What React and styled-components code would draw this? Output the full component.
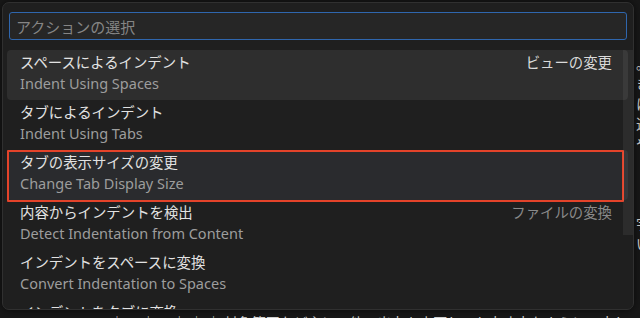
import React from 'react';
import styled, { createGlobalStyle } from 'styled-components';

const GlobalStyle = createGlobalStyle`
    html, body {
        margin: 0;
        padding: 0;
        background: #181818;
        overflow: hidden;
    }
    * {
        box-sizing: border-box;
    }
`

const Stage = styled.div`
    position: relative;
    width: 640px;
    height: 318px;
    overflow: hidden;
    background: #181818;
    font-family: "Noto Sans", "Noto Sans CJK JP", sans-serif;
`
const Editor = styled.div`
    display: flex;
    flex-direction: column;
    padding-top: 53px;
    color: #d4d4d4;
    font-size: 14px;
    font-family: "Noto Sans CJK JP", sans-serif;
`
const EditorLine = styled.div`
    height: ${p => p.$h || 20}px;
    line-height: 20px;
    white-space: nowrap;
    padding-left: ${p => p.$indent ?? 636}px;
`
const Panel = styled.div`
    position: absolute;
    left: 2px;
    top: 2px;
    width: 632px;
    height: 308px;
    display: flex;
    flex-direction: column;
    background: #1f1f1f;
    border: 1px solid #303030;
    border-radius: 7px;
    box-shadow: 0 0 8px rgba(0, 0, 0, 0.6);
    overflow: hidden;
`
const InputWrap = styled.div`
    padding: 9px 6px 10px 6px;
`
const SearchInput = styled.input`
    display: block;
    width: 100%;
    height: 28px;
    padding: 0 6px;
    background: #262626;
    border: 1.5px solid #2f66ad;
    border-radius: 3px;
    color: #dddddd;
    font-size: 15px;
    font-family: "Noto Sans CJK JP", sans-serif;
    outline: none;
    &::placeholder {
        color: #858585;
    }
`
const List = styled.div`
    position: relative;
    display: flex;
    flex-direction: column;
    padding: 0 5px 0 4px;
`
const Scrollbar = styled.div`
    position: absolute;
    right: 0;
    top: 0;
    width: 10px;
    height: 185px;
    background: rgba(255, 255, 255, 0.06);
`
const Row = styled.div`
    position: relative;
    flex: 0 0 50px;
    height: 50px;
    display: flex;
    justify-content: space-between;
    padding: 2px 16px 0 13px;
    border-radius: 4px;
    background: ${p => p.$active ? '#2e2e2e' : p.$marked ? '#2a2b2e' : 'transparent'};
    ${p => p.$marked && `
        &::after {
            content: '';
            position: absolute;
            left: 0;
            right: 4px;
            top: 0;
            bottom: -2px;
            border: 2px solid #e4432a;
            border-radius: 1px;
        }
    `}
`
const Texts = styled.div`
    display: flex;
    flex-direction: column;
`
const Title = styled.div`
    font-size: 14.4px;
    line-height: 21px;
    color: #e2e2e2;
    white-space: nowrap;
`
const Sub = styled.div`
    font-size: 14.5px;
    line-height: 21px;
    color: #9d9d9d;
    white-space: nowrap;
`
const GroupLabel = styled.div`
    font-size: 14.4px;
    line-height: 21px;
    color: ${p => p.$active ? '#dadada' : '#8a8a8a'};
    white-space: nowrap;
`

const actions = [
    { ja: 'スペースによるインデント', en: 'Indent Using Spaces', label: 'ビューの変更', active: true },
    { ja: 'タブによるインデント', en: 'Indent Using Tabs' },
    { ja: 'タブの表示サイズの変更', en: 'Change Tab Display Size', marked: true },
    { ja: '内容からインデントを検出', en: 'Detect Indentation from Content', label: 'ファイルの変換' },
    { ja: 'インデントをスペースに変換', en: 'Convert Indentation to Spaces' },
    { ja: 'インデントをタブに変換', en: 'Convert Indentation to Tabs' },
]

// the editor behind the quick pick only shows at the right edge and the bottom
const editorLines = [
    { text: '。' },
    { text: 'き' },
    { text: 'に' },
    { text: '込' },
    { text: 'や' },
    { text: '' },
    { text: '' },
    { text: '' },
    { text: '宇' },
    { text: 'い' },
    { text: '' },
    { text: '' },
    { text: '', h: 19 },
    { text: '｜ 　｜ 　｜ ｜ ｜ 対象範囲など主に、他の出力を変更しても大丈夫なように工夫しておくと、これ', indent: 110 },
]

const App = () => {
    return (
        <Stage>
            <GlobalStyle />
            <Editor>
                {editorLines.map((line, i) => (
                    <EditorLine key={i} $h={line.h} $indent={line.indent}>{line.text}</EditorLine>
                ))}
            </Editor>
            <Panel>
                <InputWrap>
                    <SearchInput placeholder="アクションの選択" />
                </InputWrap>
                <List>
                    {actions.map(a => (
                        <Row key={a.en} $active={a.active} $marked={a.marked}>
                            <Texts>
                                <Title>{a.ja}</Title>
                                <Sub>{a.en}</Sub>
                            </Texts>
                            {a.label ? <GroupLabel $active={a.active}>{a.label}</GroupLabel> : null}
                        </Row>
                    ))}
                    <Scrollbar />
                </List>
            </Panel>
        </Stage>
    )
}

export default App
